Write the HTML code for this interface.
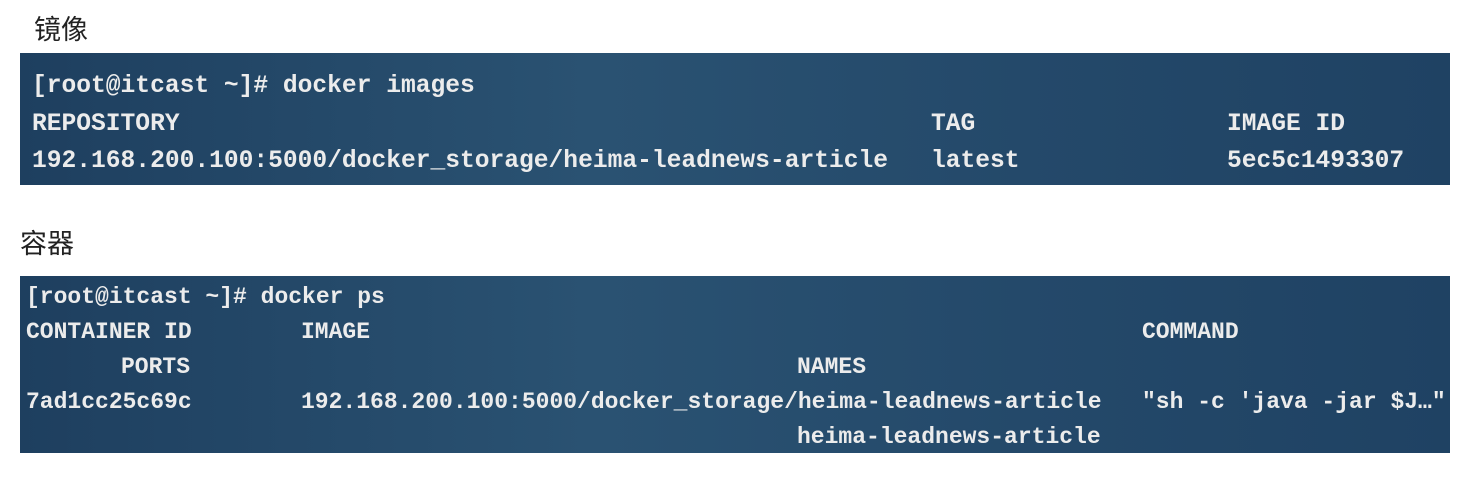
<!DOCTYPE html>
<html><head><meta charset="utf-8"><style>
body{margin:0;width:1463px;height:477px;background:#fff;position:relative;overflow:hidden}
.h{position:absolute;font-family:"Liberation Sans","Noto Sans CJK SC",sans-serif;font-size:27px;color:#222}
.t{position:absolute;left:20px;width:1430px;background:linear-gradient(90deg,#1e3f5f,#2a5272 40%,#24496a 70%,#1f4263);}
.l{position:absolute;font-family:"Liberation Mono",monospace;color:#ececec;white-space:pre;font-weight:bold;line-height:1}
.a .l{font-size:24.6px}
.b .l{font-size:23px}
</style></head><body>
<div class="h" style="left:34px;top:8px">镜像</div>
<div class="t a" style="top:53px;height:132px">
<div class="l" style="left:12px;top:22px">[root@itcast ~]# docker images</div>
<div class="l" style="left:12px;top:60px">REPOSITORY</div>
<div class="l" style="left:911px;top:60px">TAG</div>
<div class="l" style="left:1207px;top:60px">IMAGE ID</div>
<div class="l" style="left:12px;top:97px">192.168.200.100:5000/docker_storage/heima-leadnews-article</div>
<div class="l" style="left:911px;top:97px">latest</div>
<div class="l" style="left:1207px;top:97px">5ec5c1493307</div>
</div>
<div class="h" style="left:20px;top:222px">容器</div>
<div class="t b" style="top:276px;height:177px">
<div class="l" style="left:6px;top:10px">[root@itcast ~]# docker ps</div>
<div class="l" style="left:6px;top:45px">CONTAINER ID</div>
<div class="l" style="left:281px;top:45px">IMAGE</div>
<div class="l" style="left:1122px;top:45px">COMMAND</div>
<div class="l" style="left:101px;top:80px">PORTS</div>
<div class="l" style="left:777px;top:80px">NAMES</div>
<div class="l" style="left:6px;top:115px">7ad1cc25c69c</div>
<div class="l" style="left:281px;top:115px">192.168.200.100:5000/docker_storage/heima-leadnews-article</div>
<div class="l" style="left:1122px;top:115px">"sh -c 'java -jar $J…"</div>
<div class="l" style="left:777px;top:150px">heima-leadnews-article</div>
</div>
</body></html>
